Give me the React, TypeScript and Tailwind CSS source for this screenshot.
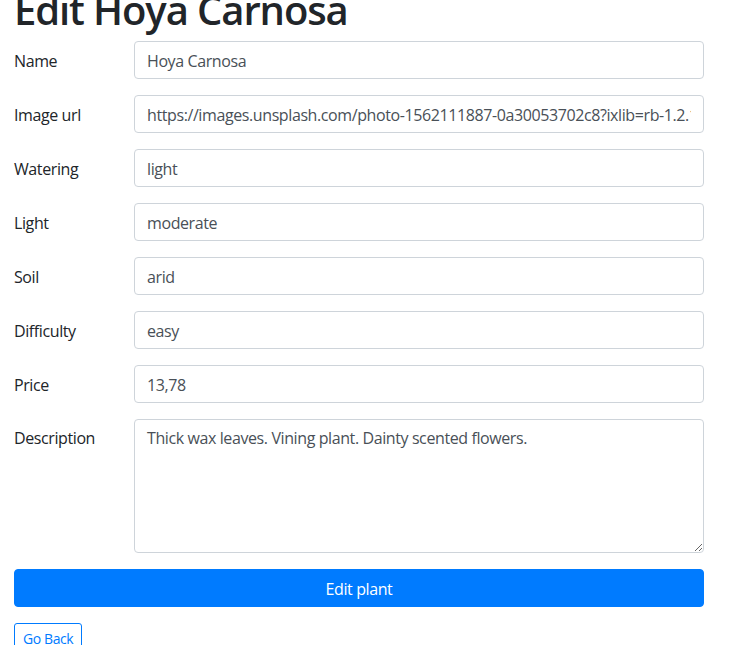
import React from "react";

const fields: { label: string; value: string }[] = [
  { label: "Name", value: "Hoya Carnosa" },
  {
    label: "Image url",
    value:
      "https://images.unsplash.com/photo-1562111887-0a30053702c8?ixlib=rb-1.2.1&ixid=eyJhcHBfaWQiOjEyMDd9&auto=format&fit=crop&w=634&q=80",
  },
  { label: "Watering", value: "light" },
  { label: "Light", value: "moderate" },
  { label: "Soil", value: "arid" },
  { label: "Difficulty", value: "easy" },
  { label: "Price", value: "13,78" },
];

export default function App() {
  return (
    <div
      className="w-[734px] h-[645px] overflow-hidden bg-white text-[#212529]"
      style={{ fontFamily: '"Open Sans", "Noto Sans", sans-serif' }}
    >
      <div className="pl-[14px] w-[704px]">
        <h1 className="-mt-[14px] mb-[7px] text-[40px] leading-[48px] font-semibold tracking-[-1.1px] text-[#212529]">
          Edit Hoya Carnosa
        </h1>
        <form onSubmit={(e) => e.preventDefault()}>
          {fields.map((f) => (
            <div key={f.label} className="flex mb-4">
              <label className="w-[120px] shrink-0 pt-[8px] pb-[6px] text-base leading-6 tracking-[-0.4px]">
                {f.label}
              </label>
              <input
                readOnly
                value={f.value}
                className="flex-1 min-w-0 h-[38px] px-3 pt-[7px] pb-[5px] text-base leading-6 tracking-[-0.4px] text-[#495057] bg-white border border-[#ced4da] rounded-[4px] outline-none"
              />
            </div>
          ))}
          <div className="flex mb-4">
            <label className="w-[120px] shrink-0 pt-[7px] pb-[7px] text-base leading-6 tracking-[-0.4px]">
              Description
            </label>
            <textarea
              readOnly
              rows={5}
              value="Thick wax leaves. Vining plant. Dainty scented flowers."
              className="flex-1 min-w-0 h-[134px] px-3 py-[6px] text-base leading-6 tracking-[-0.4px] text-[#495057] bg-white border border-[#ced4da] rounded-[4px] outline-none resize-y"
            />
          </div>
          <button
            type="submit"
            className="block w-full h-[38px] px-3 pt-[7px] pb-[5px] text-base leading-6 tracking-[-0.4px] text-white bg-[#007bff] border border-[#007bff] rounded-[4px]"
          >
            Edit plant
          </button>
        </form>
        <button className="mt-4 px-2 py-1 text-sm leading-[21px] tracking-[-0.4px] text-[#007bff] border border-[#007bff] rounded-[3px] bg-white">
          Go Back
        </button>
      </div>
    </div>
  );
}
